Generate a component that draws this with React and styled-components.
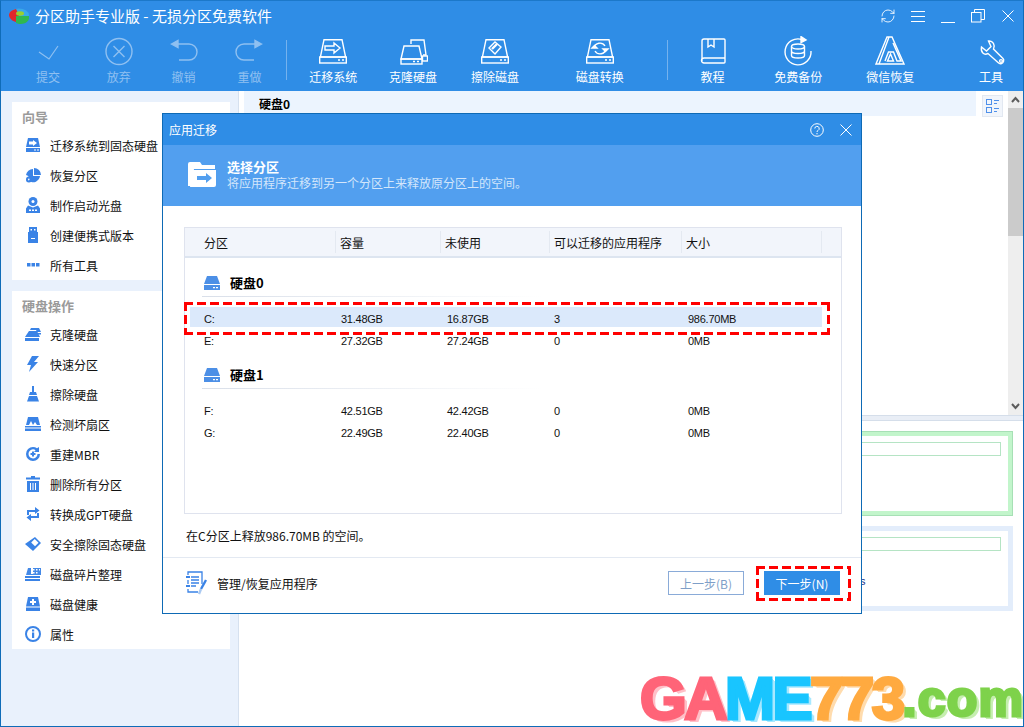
import React from "react";
import styled, { createGlobalStyle } from "styled-components";
import { RefreshCw } from "lucide-react";

const CJK = `"Noto Sans CJK SC", "Liberation Sans", sans-serif`;
const LATIN = `"Liberation Sans", "Noto Sans CJK SC", sans-serif`;

const GlobalStyle = createGlobalStyle`
  html, body { margin: 0; padding: 0; background: #fff; }
  body { font-family: ${CJK}; font-size: 12px; color: #111; }
  * { box-sizing: border-box; }
`;

// Window frame
const Window = styled.div`
  position: relative;
  width: 1024px;
  height: 727px;
  display: flex;
  flex-direction: column;
  border: 1px solid #0f6cb8;
  border-top-color: #1c78c9;
  overflow: hidden;
  background: #fff;
`;

const TitleBar = styled.header`
  height: 35px;
  flex: none;
  display: flex;
  align-items: center;
  background: #2f8de6;
  color: #fff;
  padding: 0 0 6px 7px;
`;

const AppName = styled.h1`
  margin: 0 0 0 5px;
  font-size: 15px;
  font-weight: 400;
`;

const WindowControls = styled.div`
  margin-left: auto;
  display: flex;
  align-items: center;
`;

const WindowButton = styled.span`
  width: 30px;
  height: 24px;
  display: flex;
  align-items: center;
  justify-content: center;
  color: #fff;
`;

const Toolbar = styled.nav`
  height: 55px;
  flex: none;
  display: flex;
  padding-left: 14px;
  background: #2f8de6;
`;

const ToolButton = styled.div`
  width: 64px;
  margin-left: ${(p) => p.$gap}px;
  display: flex;
  flex-direction: column;
  align-items: center;
  color: ${(p) => (p.$off ? "#8fc0f1" : "#fff")};
`;

const ToolLabel = styled.span`
  font-size: 12px;
  line-height: 14px;
  margin-top: 4px;
  white-space: nowrap;
`;

const ToolSep = styled.i`
  width: 1px;
  height: 40px;
  margin: 4px 0 0 ${(p) => p.$gap}px;
  background: #75b2ee;
`;

const Main = styled.div`
  flex: 1;
  display: flex;
  min-height: 0;
`;

// Left column
const Sidebar = styled.aside`
  width: 238px;
  flex: none;
  padding: 11px 8px 0 11px;
  background: #e9f1fc;
  border-right: 1px solid #d6e1ef;
`;

const Panel = styled.section`
  background: #fff;
  margin-bottom: 11px;
`;

const PanelTitle = styled.h3`
  height: 28px;
  margin: 0;
  padding-left: 10px;
  display: flex;
  align-items: center;
  font-size: 13px;
  font-weight: 700;
  color: #9a9a9a;
`;

const NavItem = styled.div`
  height: 30px;
  display: flex;
  align-items: center;
  padding-left: 13px;
  white-space: nowrap;
`;

const NavIcon = styled.svg`
  width: 16px;
  height: 16px;
  flex: none;
  margin-right: 9px;
  fill: #3a83e6;
`;

// Right column
const Content = styled.div`
  flex: 1;
  display: flex;
  flex-direction: column;
  min-width: 0;
`;

const Upper = styled.div`
  height: 324px;
  flex: none;
  display: flex;
`;

const DiskPane = styled.div`
  flex: 1;
  padding-left: 5px;
`;

const DiskHead = styled.div`
  display: flex;
  align-items: flex-start;
`;

const DiskHeadLabel = styled.div`
  flex: 1;
  height: 25px;
  padding-left: 15px;
  display: flex;
  align-items: center;
  background: #ecf4fe;
  font-size: 12px;
  font-weight: 700;
  color: #000;
`;

const ViewToggle = styled.div`
  width: 21px;
  height: 22px;
  margin: 4px 5px 0 6px;
  display: flex;
  align-items: center;
  justify-content: center;
  background: #f1f5fb;
  border: 1px solid #e2e8f1;
`;

const ScrollBar = styled.div`
  width: 15px;
  flex: none;
  display: flex;
  flex-direction: column;
  align-items: center;
  background: #eeeeee;
`;

const ScrollArrow = styled.div`
  height: 17px;
  flex: none;
  display: flex;
  align-items: center;
  justify-content: center;
`;

const ScrollThumb = styled.div`
  width: 100%;
  height: 128px;
  background: #cbcbcb;
  margin-bottom: auto;
`;

const Splitter = styled.div`
  height: 6px;
  flex: none;
  background: #e9eef6;
  border-top: 1px solid #d5deea;
  border-bottom: 1px solid #d5deea;
`;

const Lower = styled.div`
  flex: 1;
  padding: 10px 10px 0 11px;
`;

const DiskCard = styled.div`
  height: 85px;
  margin-bottom: 10px;
  padding: 10px 11px 0 12px;
  background: #fff;
  border: ${(p) => (p.$used ? "1px solid #a7e0b5" : "1px solid #e3edfb")};
  box-shadow: inset 0 0 0 4px ${(p) => (p.$used ? "#c2f5cb" : "#e3edfb")};
`;

const CardBar = styled.div`
  height: 14px;
  border: 1px solid #b5e4c4;
`;

const CardNote = styled.div`
  margin: 24px 0 0 597px;
  font-family: ${LATIN};
  font-size: 11px;
  line-height: 13px;
  color: #23358c;
`;

// Dialog floating over the main window
const Dialog = styled.div`
  position: absolute;
  left: 161px;
  top: 112px;
  width: 700px;
  height: 501px;
  display: flex;
  flex-direction: column;
  background: #fff;
  border: 1px solid #0e6ab5;
`;

const DialogTitle = styled.div`
  height: 31px;
  flex: none;
  display: flex;
  align-items: center;
  padding-left: 6px;
  background: #2f8de6;
  color: #fff;
`;

const DialogButtons = styled.div`
  margin-left: auto;
  display: flex;
  align-items: center;
  gap: 16px;
  padding-right: 9px;
`;

const DialogBanner = styled.div`
  height: 61px;
  flex: none;
  display: flex;
  align-items: center;
  padding: 0 0 2px 24px;
  background: #529fef;
`;

const BannerText = styled.div`
  margin-left: 11px;
`;

const BannerHeading = styled.div`
  font-size: 13px;
  line-height: 16px;
  font-weight: 700;
  color: #fff;
`;

const BannerSub = styled.div`
  font-size: 12px;
  line-height: 15px;
  color: #d3e6fb;
`;

const Table = styled.div`
  height: 287px;
  flex: none;
  margin: 21px 19px 0 21px;
  border: 1px solid #dfe3ee;
`;

const TableHead = styled.div`
  height: 30px;
  display: grid;
  grid-template-columns: 151px 105px 109px 132px 140px 1fr;
  background: #f2f5fb;
  border-bottom: 2px solid #dde5f0;
  align-items: center;
`;

const HeadCell = styled.div`
  height: 22px;
  display: flex;
  align-items: center;
  padding-left: ${(p) => (p.$first ? 19 : 4)}px;
  border-right: ${(p) => (p.$last ? 0 : "1px solid #e4e9f1")};
`;

const Group = styled.div`
  margin-top: ${(p) => p.$top}px;
  padding-left: 17px;
`;

const GroupHead = styled.div`
  height: 29px;
  display: flex;
  align-items: center;
  border-bottom: 1px solid transparent;
  border-image: linear-gradient(90deg, #d9dfe9, #ffffff 340px) 1;
  font-size: 13px;
  font-weight: 700;
  color: #000;
  padding-top: 1px;
`;

const GroupIcon = styled.svg`
  width: 16px;
  height: 14px;
  margin: 0 10px 0 2px;
  fill: #4c8fe6;
`;

const Rows = styled.div`
  margin: 10px 0 0 -12px;
  width: 632px;
  display: flex;
  flex-direction: column;
  gap: 2px;
`;

const Row = styled.div`
  height: 20px;
  display: grid;
  grid-template-columns: 145px 106px 107px 134px 1fr;
  align-items: center;
  padding-top: 3px;
  background: ${(p) => (p.$active ? "#dbe9fb" : "transparent")};
  font-family: ${LATIN};
  font-size: 11px;
  letter-spacing: -0.25px;
`;

const RowCell = styled.div`
  padding-left: ${(p) => (p.$first ? 14 : 6)}px;
`;

const Status = styled.div`
  height: 44px;
  flex: none;
  display: flex;
  align-items: center;
  padding-left: 23px;
  border-bottom: 1px solid #e3e9f2;
`;

const Footer = styled.div`
  flex: 1;
  display: flex;
  align-items: center;
  padding: 0 21px 5px 23px;
`;

const FooterLink = styled.div`
  display: flex;
  align-items: center;
  gap: 9px;
`;

const StepButton = styled.div`
  width: 76px;
  height: 24px;
  display: flex;
  align-items: center;
  justify-content: center;
  margin-left: ${(p) => (p.$primary ? "20px" : "auto")};
  font-size: 12px;
  background: ${(p) => (p.$primary ? "#2f8de6" : "#fff")};
  color: ${(p) => (p.$primary ? "#fff" : "#7f9fc8")};
  border: ${(p) => (p.$primary ? "0" : "1px solid #8aabd8")};
`;

// Red dashed call-outs
const DashedMark = styled.div`
  position: absolute;
  pointer-events: none;
  background:
    linear-gradient(90deg, #f00 9px, transparent 9px) 0 0 / 13px 3px repeat-x,
    linear-gradient(90deg, #f00 9px, transparent 9px) 0 100% / 13px 3px repeat-x,
    linear-gradient(#f00 9px, transparent 9px) 0 0 / 3px 13px repeat-y,
    linear-gradient(#f00 9px, transparent 9px) 100% 0 / 3px 13px repeat-y;
`;

const RowMark = styled(DashedMark)`
  left: 183px;
  top: 301px;
  width: 646px;
  height: 33px;
`;

const NextMark = styled(DashedMark)`
  left: 755px;
  top: 565px;
  width: 95px;
  height: 35px;
`;

// Site name in the corner
const Brand = styled.div`
  position: absolute;
  left: 639px;
  bottom: 1px;
  height: 52px;
  display: flex;
  align-items: flex-end;
  pointer-events: none;
  font-family: "Liberation Sans", sans-serif;
  font-weight: 700;
  white-space: nowrap;
`;

const BrandPart = styled.span`
  display: inline-block;
  font-size: ${(p) => p.$size}px;
  line-height: 52px;
  letter-spacing: ${(p) => p.$track}px;
  color: ${(p) => p.$color};
  -webkit-text-stroke: 3px ${(p) => p.$color};
  text-shadow: 1px 1px 0 ${(p) => p.$tint}, 2px 1px 0 ${(p) => p.$tint},
    3px 2px 0 ${(p) => p.$tint}, 4px 3px 0 ${(p) => p.$tint};
`;

/* toolbar drawings */
const Line = ({ children, w = 30, h = 30, sw = 1.4, box }) => (
  <svg
    width={w}
    height={h}
    viewBox={box || `0 0 ${w} ${h}`}
    fill="none"
    stroke="currentColor"
    strokeWidth={sw}
  >
    {children}
  </svg>
);

const DiskShell = ({ children }) => (
  <Line>
    <path d="M6 3.7h18l3.6 17.3H2.4z" />
    <rect x="1.7" y="21" width="26.6" height="6" />
    <path d="M20 24h2M24 24h2" />
    {children}
  </Line>
);

const toolIcons = {
  check: (
    <Line sw={1.2}>
      <path d="M6 16l10 7 9-13" />
    </Line>
  ),
  cancel: (
    <Line>
      <circle cx="15" cy="15.5" r="13" />
      <path d="M9.5 10l11 11M20.5 10l-11 11" />
    </Line>
  ),
  undo: (
    <Line>
      <path d="M9 8h11a8 8 0 0 1 0 16H10" />
      <path d="M2.500 8L9 4.500v7z" fill="currentColor" />
    </Line>
  ),
  redo: (
    <Line>
      <path d="M21 8H10a8 8 0 0 0 0 16h10" />
      <path d="M27.500 8L21 4.500v7z" fill="currentColor" />
    </Line>
  ),
  migrate: (
    <DiskShell>
      <path d="M7 10h9V7l6 5-6 5v-3H7z" />
    </DiskShell>
  ),
  clone: (
    <Line>
      <path d="M13 8V4h13l2 15h-3" />
      <path d="M6 10h15l3 13H3z" />
      <rect x="3" y="23" width="21" height="5" />
      <path d="M15 25.500h2M19 25.500h2" />
      <rect x="24.500" y="20" width="5" height="5" />
    </Line>
  ),
  wipe: (
    <DiskShell>
      <path d="M9 12l6-6 6 5-6 7z" />
      <path d="M12 13l5-5" strokeWidth="2.400" />
    </DiskShell>
  ),
  convert: (
    <DiskShell>
      <path d="M9 12a6 6 0 0 1 11-2M21 13a6 6 0 0 1-11 2" />
      <path d="M7 12h5l-2.500-2.500zM23 13h-5l2.500 2.500z" fill="currentColor" />
    </DiskShell>
  ),
  book: (
    <Line>
      <path d="M4 25V5a2 2 0 0 1 2-2h20a1 1 0 0 1 1 1v22a1 1 0 0 1-1 1H6a2 2 0 0 1 0-5h21" />
      <path d="M10 3v8l3-2 3 2V3" />
    </Line>
  ),
  backup: (
    <Line>
      <path d="M19 3.500A13 13 0 1 0 28 15" />
      <path d="M18 .7l5 3.300-5 2.500z" fill="currentColor" />
      <ellipse cx="15" cy="10.500" rx="6.500" ry="2.500" />
      <path d="M8.500 10.500v9c0 1.400 2.900 2.500 6.500 2.500s6.500-1.100 6.500-2.500v-9M8.500 15c0 1.400 2.900 2.500 6.500 2.500s6.500-1.100 6.500-2.500" />
    </Line>
  ),
  wechat: (
    <Line>
      <path d="M12 1h5l12 27H1z M14 1L4 28M18 7l8 18h-4l-3.500-9h-5L10 25" />
      <path d="M12.500 25l3-7 3 7z" />
    </Line>
  ),
  wrench: (
    <Line>
      <path d="M12.500 5C17 4.500 19.500 9 17.500 13L27 22.500C28.500 24 27.500 27 25.500 27.500 24 28 23 27.500 22 26.500L12 17.500C8 19.500 4.500 16.500 5.500 11L10.500 15 15 10.500Z" />
      <circle cx="25" cy="25" r="1.400" />
    </Line>
  ),
};

const tools = [
  { key: "check", label: "提交", gap: 1, off: true },
  { key: "cancel", label: "放弃", gap: 7, off: true },
  { key: "undo", label: "撤销", gap: 1, off: true },
  { key: "redo", label: "重做", gap: 2, off: true },
  { sep: 5 },
  { key: "migrate", label: "迁移系统", gap: 14 },
  { key: "clone", label: "克隆硬盘", gap: 16 },
  { key: "wipe", label: "擦除磁盘", gap: 18 },
  { key: "convert", label: "磁盘转换", gap: 41 },
  { sep: 35 },
  { key: "book", label: "教程", gap: 13 },
  { key: "backup", label: "免费备份", gap: 22 },
  { key: "wechat", label: "微信恢复", gap: 28 },
  { key: "wrench", label: "工具", gap: 37 },
];

/* sidebar drawings, all on a 16 unit box */
const W = ({ d }) => <path d={d} fill="#fff" />;

const navIcons = {
  migrate: (
    <>
      <path d="M3 1h10l2 9H1z" />
      <path d="M1 11h14v4H1z" />
      <W d="M4 4.500h4V3l4 3-4 3V7.500H4zM9 12.500h2v1H9zM12 12.500h2v1h-2z" />
    </>
  ),
  recover: (
    <>
      <path d="M9 1a7 7 0 0 1 7 7H9zM8 2v7h7a7 7 0 0 1-11 5 4 4 0 0 0-3-6 7 7 0 0 1 7-6z" />
      <path d="M4 9.500a3 3 0 1 1-.1 6 3 3 0 0 1 .1-6zm0 2a1 1 0 1 0 0 2 1 1 0 0 0 0-2z" />
    </>
  ),
  boot: (
    <>
      <path d="M8 0a4.500 4.500 0 1 1 0 9 4.500 4.500 0 0 1 0-9z" />
      <W d="M8 3a1.500 1.500 0 1 1 0 3 1.500 1.500 0 0 1 0-3z" />
      <path d="M3 8.500l5 2 5-2 2 3v4.500H1v-4.500z" />
      <W d="M4 12.500h2v1.500H4zM7 12.500h2v1.500H7zM10 12.500h2v1.500h-2z" />
    </>
  ),
  usb: (
    <>
      <path d="M4 0h8v5H4z" />
      <path d="M3 5h10v11H3z" />
      <W d="M5.500 2h1.500v1.500H5.500zM9 2h1.500v1.500H9zM6 11h4v1H6z" />
    </>
  ),
  dots: <path d="M2 6h3.500v3.500H2zM6.500 6H10v3.500H6.500zM11 6h3.500v3.500H11z" />,
  clone: (
    <>
      <path d="M4 5h8l3 6H0z" />
      <path d="M0 12h14v3H0z" />
      <path d="M6 2h8l2 4h-4l-1-2H5z" />
      <path d="M13 7h3v1.500h-3z" />
    </>
  ),
  bolt: <path d="M7 0h7L9 6h4L4 16l2-7H2z" />,
  broom: (
    <>
      <path d="M7 0h2v6H7z" />
      <path d="M5 6h6l1 3H4z" />
      <path d="M4 10h8l2 5.500H2z" />
    </>
  ),
  scan: (
    <>
      <path d="M3 1h10l2 8h-3l-2-3-2 3-2-4-2 4H1z" />
      <path d="M0 10h16v1.500H0zM0 12.500h16V15H0z" />
    </>
  ),
  rebuild: (
    <>
      <path d="M8 1a7 7 0 0 1 4 1.300L14 1v5H9l1.600-1.800A4.500 4.500 0 1 0 12.500 8H15a7 7 0 1 1-7-7z" />
      <path d="M7 5.500h2V7h1.500v2H9v1.500H7V9H5.500V7H7z" />
    </>
  ),
  trash: (
    <>
      <path d="M6 0h4v1.500h5V3.500H1V1.500h5z" />
      <path d="M2 5h12v11H2z" />
      <W d="M5 7h1v7H5zM7.500 7h1v7h-1zM10 7h1v7h-1z" />
    </>
  ),
  swap: (
    <>
      <path d="M2 4h8V1l4.500 3.500L10 8V6H4v3H2z" />
      <path d="M14 12H6v3l-4.500-3.500L6 8v2h6V7h2z" />
    </>
  ),
  eraser: (
    <>
      <path d="M10 1l6 6-8 8L0 8z" />
      <W d="M9.700 3l3.800 3.800-3.500 3.500-3.800-3.800z" />
    </>
  ),
  defrag: (
    <>
      <path d="M3 2h3v6h2V2h8v7H1z" opacity=".95" />
      <path d="M0 10h15v2H0zM0 13h15v2H0z" />
      <W d="M8 3h1.500v1.500H8zM11 3h1.500v1.500H11zM14 3h1v1.500h-1zM8 6h1.500v1.500H8zM11 6h1.500v1.500H11z" />
    </>
  ),
  health: (
    <>
      <path d="M3 1h10l2 9.500H1z" />
      <path d="M1 11.500h14V15H1z" />
      <W d="M7 3h2v2h2v2H9v2H7V7H5V5h2z" />
    </>
  ),
  info: (
    <>
      <path d="M8 0a8 8 0 1 1 0 16A8 8 0 0 1 8 0zm0 2a6 6 0 1 0 0 12A6 6 0 0 0 8 2z" />
      <path d="M7 3.500h2.200v2H7zM7 6.500h2.200V12H7z" />
    </>
  ),
};

const wizardItems = [
  ["migrate", "迁移系统到固态硬盘"],
  ["recover", "恢复分区"],
  ["boot", "制作启动光盘"],
  ["usb", "创建便携式版本"],
  ["dots", "所有工具"],
];

const diskItems = [
  ["clone", "克隆硬盘"],
  ["bolt", "快速分区"],
  ["broom", "擦除硬盘"],
  ["scan", "检测坏扇区"],
  ["rebuild", "重建MBR"],
  ["trash", "删除所有分区"],
  ["swap", "转换成GPT硬盘"],
  ["eraser", "安全擦除固态硬盘"],
  ["defrag", "磁盘碎片整理"],
  ["health", "磁盘健康"],
  ["info", "属性"],
];

const NavList = ({ title, items }) => (
  <Panel>
    <PanelTitle>{title}</PanelTitle>
    {items.map(([icon, label]) => (
      <NavItem key={label}>
        <NavIcon viewBox="0 0 16 16">{navIcons[icon]}</NavIcon>
        {label}
      </NavItem>
    ))}
  </Panel>
);

const DriveGlyph = () => (
  <GroupIcon viewBox="0 0 16 14">
    <path d="M3 0h10l3 8H0z" />
    <path d="M0 9h16v5H0z" />
    <path d="M9 11h2v1.200H9zM12 11h2v1.200h-2z" fill="#fff" />
  </GroupIcon>
);

const PartitionRow = ({ cells, active }) => (
  <Row $active={active}>
    {cells.map((c, i) => (
      <RowCell key={i} $first={i === 0}>
        {c}
      </RowCell>
    ))}
  </Row>
);

const App = () => (
  <>
    <GlobalStyle />
    <Window>
      <TitleBar>
        <svg width="22" height="18" viewBox="0 0 22 18">
          <ellipse cx="11" cy="8" rx="10" ry="6.500" fill="#39a9e8" />
          <path d="M1 8c0-3 3-5 7-6l3 6-3 7c-4-1-7-4-7-7z" fill="#e0262b" />
          <path d="M8 9h13v2c0 3-4 6-8 6-2 0-4-.5-5-1z" fill="#2fb84f" />
          <ellipse cx="12" cy="6.500" rx="4" ry="2.200" fill="#9ad02c" />
        </svg>
        <AppName>分区助手专业版 - 无损分区免费软件</AppName>
        <WindowControls>
          <WindowButton>
            <RefreshCw size={16} strokeWidth={1.3} />
          </WindowButton>
          <WindowButton>
            <Line w={14} h={12} sw={1}>
              <path d="M0 1.500h14M0 6.500h14M0 11.500h14" />
            </Line>
          </WindowButton>
          <WindowButton>
            <Line w={14} h={14} sw={1}>
              <path d="M0 13.500h14" />
            </Line>
          </WindowButton>
          <WindowButton>
            <Line w={14} h={14} sw={1}>
              <rect x=".5" y="3.500" width="9.500" height="9.500" />
              <path d="M3.500 3.500V.5h10v10H10" />
            </Line>
          </WindowButton>
          <WindowButton>
            <Line w={12} h={12} sw={1}>
              <path d="M.5.5l11 11M11.500.5l-11 11" />
            </Line>
          </WindowButton>
        </WindowControls>
      </TitleBar>

      <Toolbar>
        {tools.map((t, i) =>
          t.sep ? (
            <ToolSep key={i} $gap={t.sep} />
          ) : (
            <ToolButton key={t.key} $gap={t.gap} $off={t.off}>
              {toolIcons[t.key]}
              <ToolLabel>{t.label}</ToolLabel>
            </ToolButton>
          )
        )}
      </Toolbar>

      <Main>
        <Sidebar>
          <NavList title="向导" items={wizardItems} />
          <NavList title="硬盘操作" items={diskItems} />
        </Sidebar>

        <Content>
          <Upper>
            <DiskPane>
              <DiskHead>
                <DiskHeadLabel>硬盘0</DiskHeadLabel>
                <ViewToggle>
                  <svg width="14" height="15" viewBox="0 0 14 15" fill="none" stroke="#4f90ea">
                    <rect x=".5" y=".5" width="5" height="5" />
                    <rect x=".5" y="8.500" width="5" height="5" />
                    <path d="M8 1.500h5M8 4.500h3M8 9.500h5M8 12.500h3" />
                  </svg>
                </ViewToggle>
              </DiskHead>
            </DiskPane>
            <ScrollBar>
              <ScrollArrow>
                <svg width="9" height="7" viewBox="0 0 9 7" fill="none" stroke="#5c5c5c" strokeWidth="2">
                  <path d="M1 6l3.500-4L8 6" />
                </svg>
              </ScrollArrow>
              <ScrollThumb />
              <ScrollArrow>
                <svg width="9" height="7" viewBox="0 0 9 7" fill="none" stroke="#5c5c5c" strokeWidth="2">
                  <path d="M1 1l3.500 4L8 1" />
                </svg>
              </ScrollArrow>
            </ScrollBar>
          </Upper>
          <Splitter />
          <Lower>
            <DiskCard $used>
              <CardBar />
            </DiskCard>
            <DiskCard>
              <CardBar />
              <CardNote>s</CardNote>
            </DiskCard>
          </Lower>
        </Content>
      </Main>

      <Dialog>
        <DialogTitle>
          应用迁移
          <DialogButtons>
            <svg width="14" height="14" viewBox="0 0 14 14" fill="none" stroke="#fff">
              <circle cx="7" cy="7" r="6.300" />
              <path d="M4.800 5.500a2.200 2.200 0 1 1 3.200 2c-.7.400-1 .8-1 1.500M7 10v1.300" />
            </svg>
            <svg width="12" height="12" viewBox="0 0 12 12" fill="none" stroke="#fff">
              <path d="M.5.5l11 11M11.500.5l-11 11" />
            </svg>
          </DialogButtons>
        </DialogTitle>
        <DialogBanner>
          <svg width="29" height="27" viewBox="0 0 29 27">
            <path d="M3 1h10l2 3h13v4H7L4 25H1V3a2 2 0 0 1 2-2z" fill="#fff" />
            <path d="M6 9h23v15a2 2 0 0 1-2 2H3z" fill="#fff" />
            <path d="M10 15h9v-3l6 5-6 5v-3h-9z" fill="#529fef" />
          </svg>
          <BannerText>
            <BannerHeading>选择分区</BannerHeading>
            <BannerSub>将应用程序迁移到另一个分区上来释放原分区上的空间。</BannerSub>
          </BannerText>
        </DialogBanner>

        <Table>
          <TableHead>
            <HeadCell $first>分区</HeadCell>
            <HeadCell>容量</HeadCell>
            <HeadCell>未使用</HeadCell>
            <HeadCell>可以迁移的应用程序</HeadCell>
            <HeadCell>大小</HeadCell>
            <HeadCell $last />
          </TableHead>
          <Group $top={10}>
            <GroupHead>
              <DriveGlyph />
              硬盘0
            </GroupHead>
            <Rows>
              <PartitionRow active cells={["C:", "31.48GB", "16.87GB", "3", "986.70MB"]} />
              <PartitionRow cells={["E:", "27.32GB", "27.24GB", "0", "0MB"]} />
            </Rows>
          </Group>
          <Group $top={11}>
            <GroupHead>
              <DriveGlyph />
              硬盘1
            </GroupHead>
            <Rows>
              <PartitionRow cells={["F:", "42.51GB", "42.42GB", "0", "0MB"]} />
              <PartitionRow cells={["G:", "22.49GB", "22.40GB", "0", "0MB"]} />
            </Rows>
          </Group>
        </Table>

        <Status>在C分区上释放986.70MB 的空间。</Status>
        <Footer>
          <FooterLink>
            <svg width="22" height="24" viewBox="0 0 22 24" fill="none" stroke="#3a83e6" strokeWidth="1.300">
              <path d="M2 4V1h14v12M2 9v4M2 18v3h10" />
              <path d="M0 6h4M0 15h4" strokeWidth="2" />
              <path d="M5 6h8M5 9h8M5 12h8M5 15h5" />
              <path d="M20 9l-5 9" strokeWidth="2.400" />
              <path d="M15 18l-2 5" stroke="#a9c9f2" strokeWidth="2.400" />
            </svg>
            管理/恢复应用程序
          </FooterLink>
          <StepButton>上一步(B)</StepButton>
          <StepButton $primary>下一步(N)</StepButton>
        </Footer>
      </Dialog>

      <RowMark />
      <NextMark />

      <Brand>
        <BrandPart $size={60} $track={-2.5} $color="#ff6478" $tint="#ffc0c8">GA</BrandPart>
        <BrandPart $size={60} $track={-2.5} $color="#19c5ff" $tint="#a8e8ff">ME</BrandPart>
        <BrandPart $size={60} $track={-2.5} $color="#ffaa40" $tint="#ffdcae">773</BrandPart>
        <BrandPart $size={50} $track={1.2} $color="#7ed24b" $tint="#c6eeb0">.com</BrandPart>
      </Brand>
    </Window>
  </>
);

export default App;
